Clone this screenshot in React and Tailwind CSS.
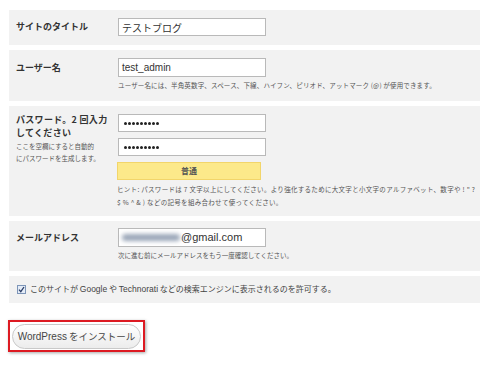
const jp = { fontFamily: '"MS PGothic", "Noto Sans CJK JP", sans-serif' };
const en = { fontFamily: '"Liberation Sans", sans-serif' };

const Field = ({ children, className = "" }) => (
    <div className={`w-[148px] h-[18px] bg-white border border-[#b9b9b9] px-[3px] flex items-center text-[10px] text-[#333] ${className}`}>
        {children}
    </div>
);

const Dots = () => (
    <span className="flex gap-[1px] ml-[2px]">
        {[...Array(9)].map((_, i) => (
            <span key={i} className="w-[3px] h-[3px] rounded-full bg-[#222]"></span>
        ))}
    </span>
);

export default function App() {
    return (
        <div className="w-[500px] h-[378px] bg-white pt-[10px] pl-[9px]" style={jp}>
            <div className="w-[471px] flex flex-col gap-[5px]">
                {/* site title */}
                <div className="h-[35px] bg-[#f2f2f2] flex items-start pt-[8px]">
                    <div className="w-[109px] pl-[7px] h-[18px] flex items-center text-[9px] font-bold text-[#333]">サイトのタイトル</div>
                    <Field>テストブログ</Field>
                </div>

                {/* user name */}
                <div className="h-[51px] bg-[#f2f2f2] flex items-start pt-[8px]">
                    <div className="w-[109px] pl-[7px] h-[19px] flex items-center text-[9px] font-bold text-[#333]">ユーザー名</div>
                    <div className="flex flex-col">
                        <Field className="h-[19px]"><span style={en}>test_admin</span></Field>
                        <p className="mt-[4px] text-[6.5px] text-[#555] whitespace-nowrap tracking-[0.15px]">ユーザー名には、半角英数字、スペース、下線、ハイフン、ピリオド、アットマーク (@) が使用できます。</p>
                    </div>
                </div>

                {/* password */}
                <div className="h-[110px] bg-[#f2f2f2] flex items-start pt-[7px]">
                    <div className="w-[109px] pl-[7px]">
                        <p className="text-[9px] font-bold text-[#333] leading-[13px] whitespace-nowrap tracking-[0.3px]">パスワード。2 回入力</p>
                        <p className="text-[9px] font-bold text-[#333] leading-[13px] whitespace-nowrap tracking-[0.3px]">してください</p>
                        <p className="mt-[1px] text-[6.5px] text-[#555] leading-[12px] whitespace-nowrap">ここを空欄にすると自動的<br />にパスワードを生成します。</p>
                    </div>
                    <div className="flex flex-col pt-[1px]">
                        <Field><Dots /></Field>
                        <Field className="mt-[6px]"><Dots /></Field>
                        <div className="mt-[6px] -ml-[1px] w-[144px] h-[18px] bg-[#fce98a] border border-[#f2d56a] flex items-center justify-center text-[8px] font-bold text-[#555]">普通</div>
                        <p className="mt-[3px] -ml-[1px] text-[6.5px] text-[#555] leading-[13px] whitespace-nowrap tracking-[0.3px]">
                            ヒント: パスワードは 7 文字以上にしてください。より強化するために大文字と小文字のアルファベット、数字や ! " ?<br />
                            $ % ^ &amp; ) などの記号を組み合わせて使ってください。
                        </p>
                    </div>
                </div>

                {/* email */}
                <div className="h-[50px] bg-[#f2f2f2] flex items-start pt-[7px]">
                    <div className="w-[109px] pl-[7px] h-[19px] flex items-center text-[9px] font-bold text-[#333]">メールアドレス</div>
                    <div className="flex flex-col">
                        <Field className="h-[19px]">
                            <span className="w-[58px] h-[7px] bg-[#9aa6b8] blur-[2px] rounded-sm mr-[1px]"></span>
                            <span className="text-[11px]" style={en}>@gmail.com</span>
                        </Field>
                        <p className="mt-[4px] text-[6.5px] text-[#555] whitespace-nowrap">次に進む前にメールアドレスをもう一度確認してください。</p>
                    </div>
                </div>

                {/* privacy */}
                <div className="h-[27px] bg-[#f2f2f2] flex items-center pl-[8px] gap-[4px]">
                    <span className="w-[9px] h-[9px] border border-[#7d95b8] bg-[#e4ecf7] flex items-center justify-center">
                        <svg width="7" height="7" viewBox="0 0 7 7"><path d="M1 3.6 L2.8 5.6 L6 1" stroke="#2a3d66" strokeWidth="1.3" fill="none" /></svg>
                    </span>
                    <span className="text-[8px] text-[#444] whitespace-nowrap">
                        このサイトが <span className="text-[8.5px]" style={en}>Google</span> や <span className="text-[8.5px]" style={en}>Technorati</span> などの検索エンジンに表示されるのを許可する。
                    </span>
                </div>
            </div>

            {/* install button */}
            <div className="mt-[17px] -ml-[1px] w-[137px] h-[32px] border-2 border-[#dd1a22] shadow-[1px_1px_3px_rgba(0,0,0,0.35)] flex items-center justify-center">
                <button className="w-[129px] h-[25px] rounded-full border border-[#c9c9c9] bg-gradient-to-b from-white to-[#ececec] text-[9.5px] text-[#464646] whitespace-nowrap">
                    <span className="text-[10px]" style={en}>WordPress</span> をインストール
                </button>
            </div>
        </div>
    );
}
